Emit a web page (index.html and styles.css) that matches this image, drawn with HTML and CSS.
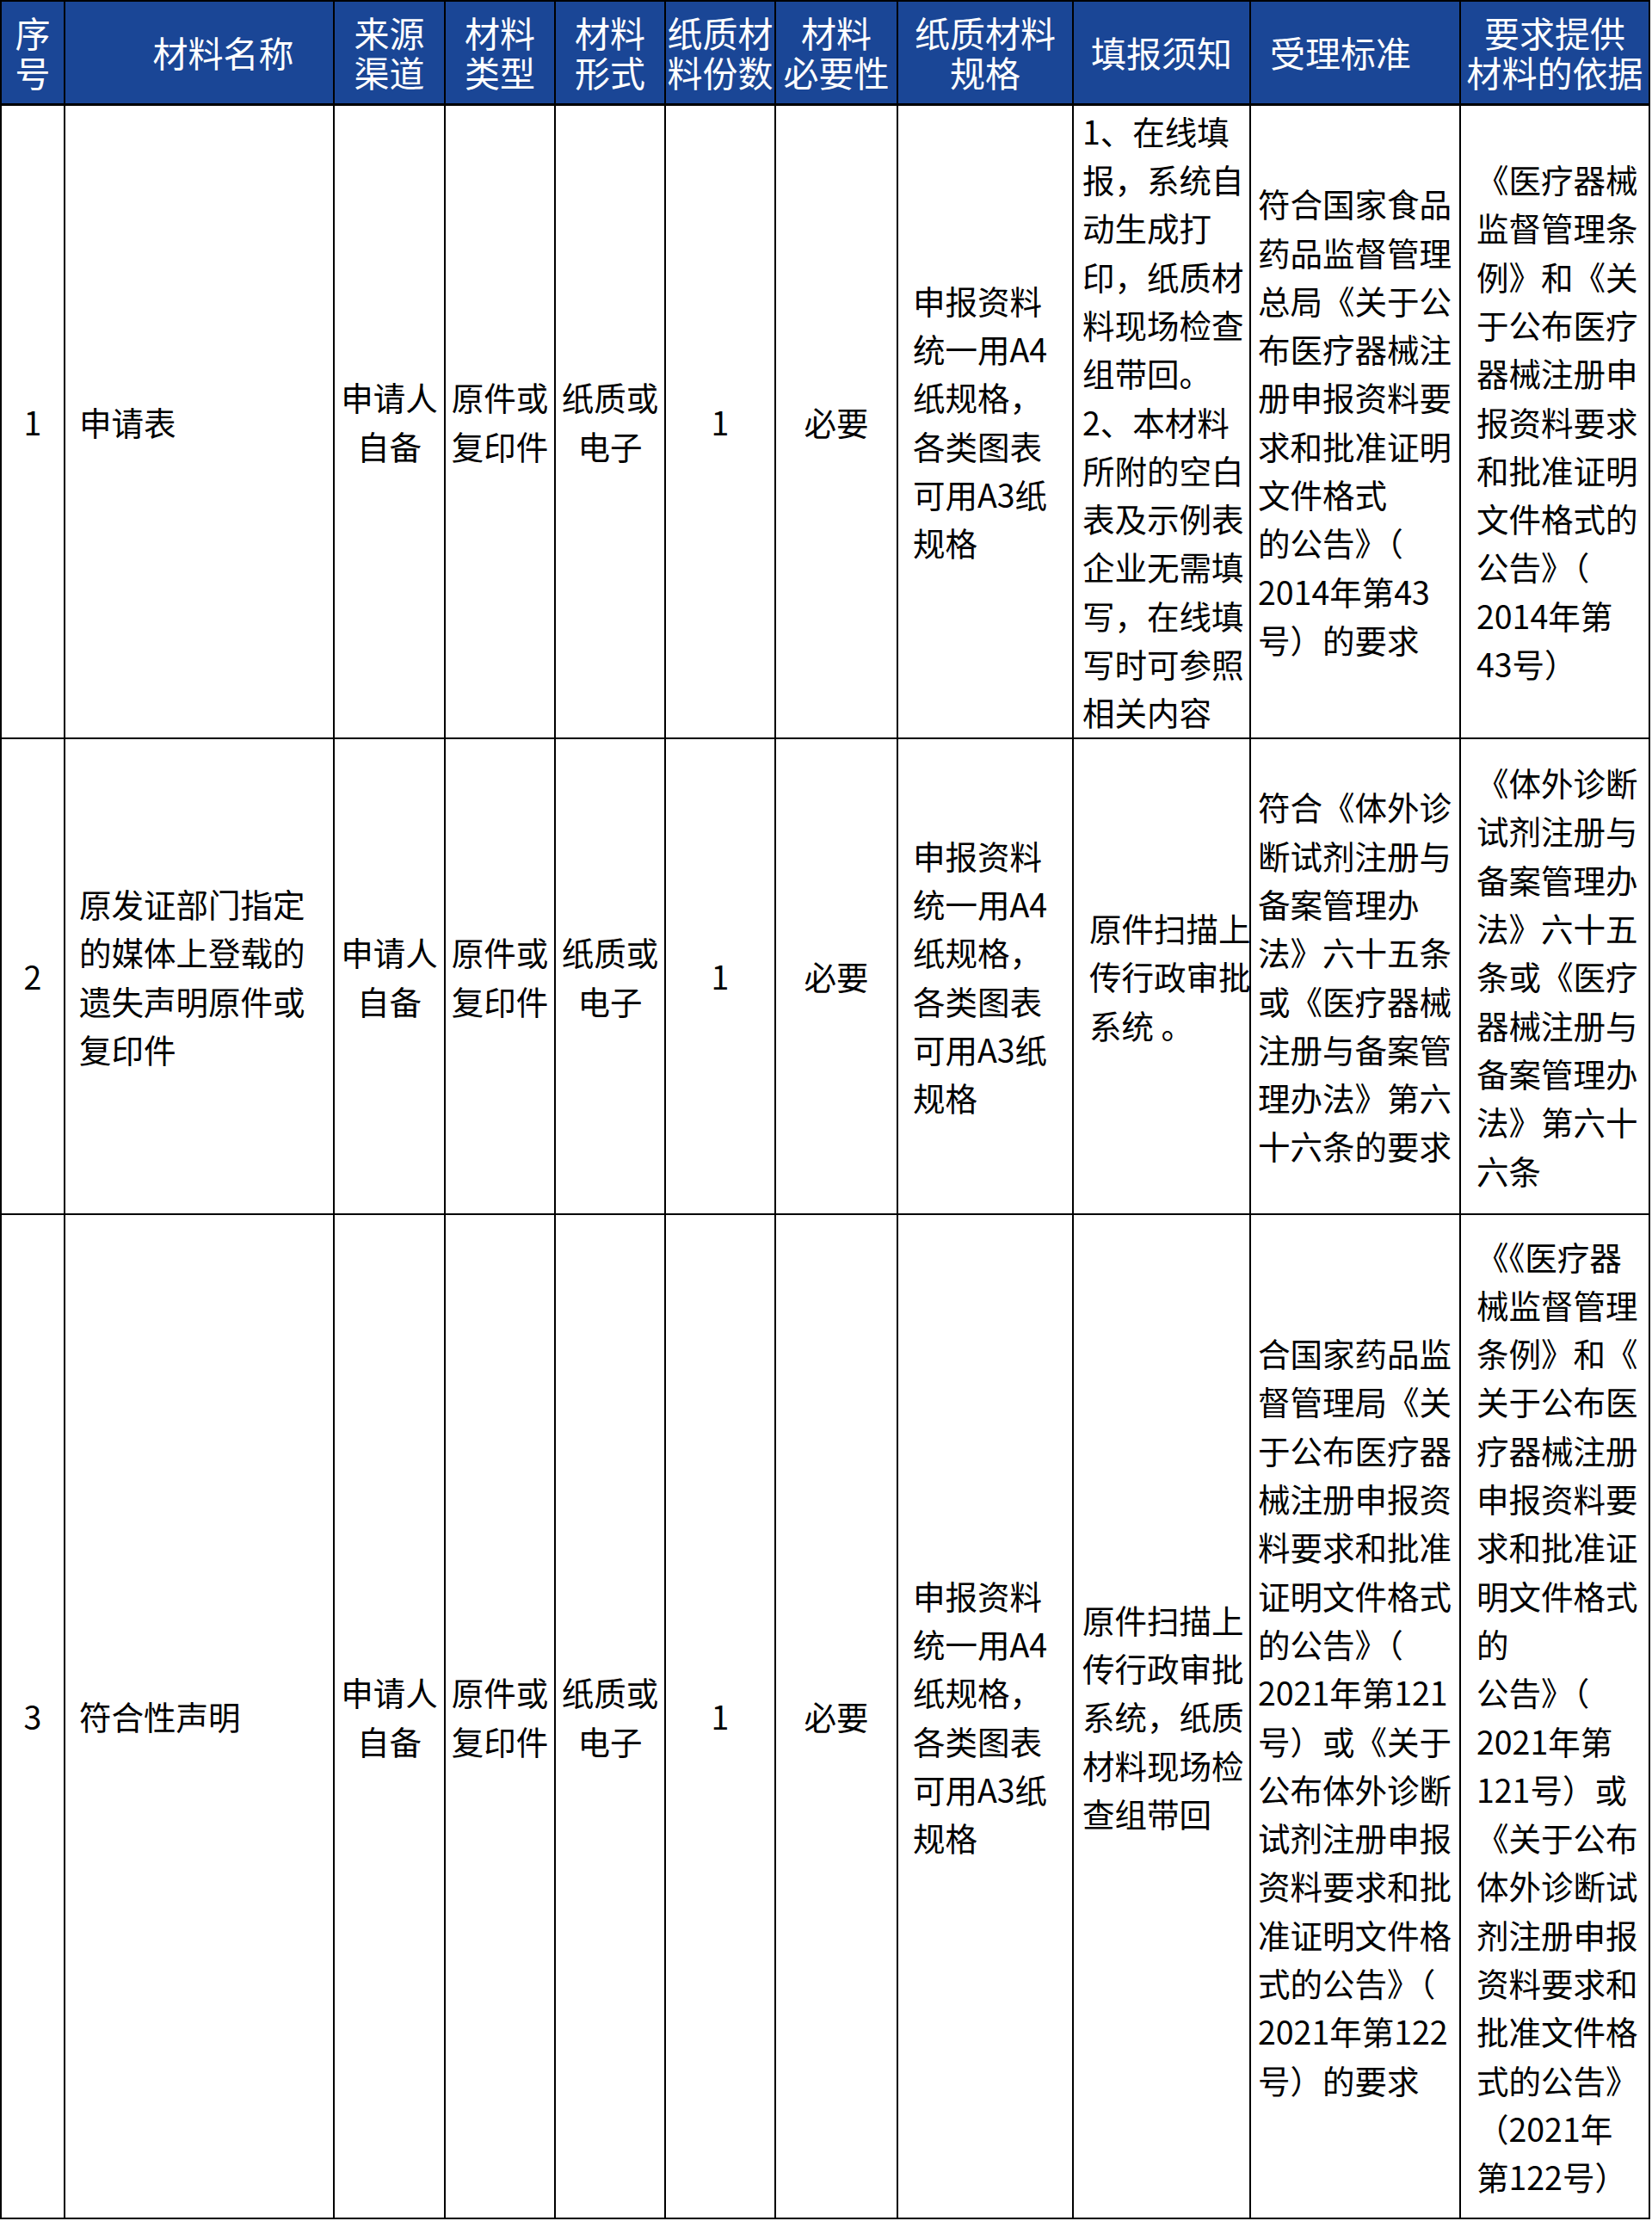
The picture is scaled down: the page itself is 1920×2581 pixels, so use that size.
FILE: index.html
```html
<!DOCTYPE html>
<html lang="zh-CN">
<head>
<meta charset="utf-8">
<title>材料清单</title>
<link rel="stylesheet" href="styles.css">
</head>
<body>
<table class="sheet">
  <colgroup>
    <col class="w-no">
    <col class="w-name">
    <col class="w-src">
    <col class="w-type">
    <col class="w-form">
    <col class="w-copies">
    <col class="w-need">
    <col class="w-spec">
    <col class="w-note">
    <col class="w-std">
    <col class="w-basis">
  </colgroup>
  <thead>
    <tr class="head">
      <th>序<br>号</th>
      <th class="h-name">材料名称</th>
      <th>来源<br>渠道</th>
      <th>材料<br>类型</th>
      <th>材料<br>形式</th>
      <th>纸质材<br>料份数</th>
      <th>材料<br>必要性</th>
      <th>纸质材料<br>规格</th>
      <th>填报须知</th>
      <th class="h-std">受理标准</th>
      <th>要求提供<br>材料的依据</th>
    </tr>
  </thead>
  <tbody>
    <tr class="r1">
      <td class="mid">1</td>
      <td class="name">申请表</td>
      <td class="mid">申请人<br>自备</td>
      <td class="mid">原件或<br>复印件</td>
      <td class="mid">纸质或<br>电子</td>
      <td class="mid">1</td>
      <td class="mid">必要</td>
      <td class="spec">申报资料<br>统一用A4<br>纸规格，<br>各类图表<br>可用A3纸<br>规格</td>
      <td class="note">1、在线填<br>报，系统自<br>动生成打<br>印，纸质材<br>料现场检查<br>组带回。<br>2、本材料<br>所附的空白<br>表及示例表<br>企业无需填<br>写，在线填<br>写时可参照<br>相关内容</td>
      <td class="std">符合国家食品<br>药品监督管理<br>总局《关于公<br>布医疗器械注<br>册申报资料要<br>求和批准证明<br>文件格式<br>的公告》（<br>2014年第43<br>号）的要求</td>
      <td class="basis">《医疗器械<br>监督管理条<br>例》和《关<br>于公布医疗<br>器械注册申<br>报资料要求<br>和批准证明<br>文件格式的<br>公告》（<br>2014年第<br>43号）</td>
    </tr>
    <tr class="r2">
      <td class="mid">2</td>
      <td class="name">原发证部门指定<br>的媒体上登载的<br>遗失声明原件或<br>复印件</td>
      <td class="mid">申请人<br>自备</td>
      <td class="mid">原件或<br>复印件</td>
      <td class="mid">纸质或<br>电子</td>
      <td class="mid">1</td>
      <td class="mid">必要</td>
      <td class="spec">申报资料<br>统一用A4<br>纸规格，<br>各类图表<br>可用A3纸<br>规格</td>
      <td class="note note-shift">原件扫描上<br>传行政审批<br>系统 。</td>
      <td class="std">符合《体外诊<br>断试剂注册与<br>备案管理办<br>法》六十五条<br>或《医疗器械<br>注册与备案管<br>理办法》第六<br>十六条的要求</td>
      <td class="basis">《体外诊断<br>试剂注册与<br>备案管理办<br>法》六十五<br>条或《医疗<br>器械注册与<br>备案管理办<br>法》第六十<br>六条</td>
    </tr>
    <tr class="r3">
      <td class="mid">3</td>
      <td class="name">符合性声明</td>
      <td class="mid">申请人<br>自备</td>
      <td class="mid">原件或<br>复印件</td>
      <td class="mid">纸质或<br>电子</td>
      <td class="mid">1</td>
      <td class="mid">必要</td>
      <td class="spec">申报资料<br>统一用A4<br>纸规格，<br>各类图表<br>可用A3纸<br>规格</td>
      <td class="note">原件扫描上<br>传行政审批<br>系统，纸质<br>材料现场检<br>查组带回</td>
      <td class="std">合国家药品监<br>督管理局《关<br>于公布医疗器<br>械注册申报资<br>料要求和批准<br>证明文件格式<br>的公告》（<br>2021年第121<br>号）或《关于<br>公布体外诊断<br>试剂注册申报<br>资料要求和批<br>准证明文件格<br>式的公告》（<br>2021年第122<br>号）的要求</td>
      <td class="basis">《《医疗器<br>械监督管理<br>条例》和《<br>关于公布医<br>疗器械注册<br>申报资料要<br>求和批准证<br>明文件格式<br>的<br>公告》（<br>2021年第<br>121号）或<br>《关于公布<br>体外诊断试<br>剂注册申报<br>资料要求和<br>批准文件格<br>式的公告》<br>（2021年<br>第122号）</td>
    </tr>
  </tbody>
</table>
</body>
</html>
```

FILE: styles.css
```css
html, body {
  margin: 0;
  padding: 0;
  background: #ffffff;
}

body {
  font-family: "Noto Sans CJK SC", "Noto Sans", sans-serif;
  color: #000000;
}

.sheet {
  border-collapse: collapse;
  table-layout: fixed;
  width: 1918px;
}

.w-no { width: 74px; }
.w-name { width: 313px; }
.w-src { width: 129px; }
.w-type { width: 128px; }
.w-form { width: 128px; }
.w-copies { width: 128px; }
.w-need { width: 142px; }
.w-spec { width: 204px; }
.w-note { width: 206px; }
.w-std { width: 244px; }
.w-basis { width: 220px; }

.sheet th,
.sheet td {
  border: 2px solid #000000;
  padding: 0;
  vertical-align: middle;
  white-space: nowrap;
  overflow: hidden;
}

.sheet th {
  background: #1a4696;
  color: #ffffff;
  font-weight: normal;
  font-size: 41px;
  line-height: 45.5px;
  text-align: center;
  border-bottom-width: 3px;
}

.sheet th.h-name { padding-left: 56px; }
.sheet th.h-std { padding-right: 34px; }

.head { height: 120px; }
.r1 { height: 737px; }
.r2 { height: 553px; }
.r3 { height: 1167px; }

.sheet td {
  font-size: 37.5px;
  line-height: 56.3px;
}

.sheet td.mid { text-align: center; }
.sheet td.name { padding-left: 16px; }
.sheet td.spec { padding-left: 17px; }
.sheet td.note { padding-left: 10px; }
.sheet td.note-shift { padding-left: 18px; }
.sheet td.std { padding-left: 8px; }
.sheet td.basis { padding-left: 18px; }
```
